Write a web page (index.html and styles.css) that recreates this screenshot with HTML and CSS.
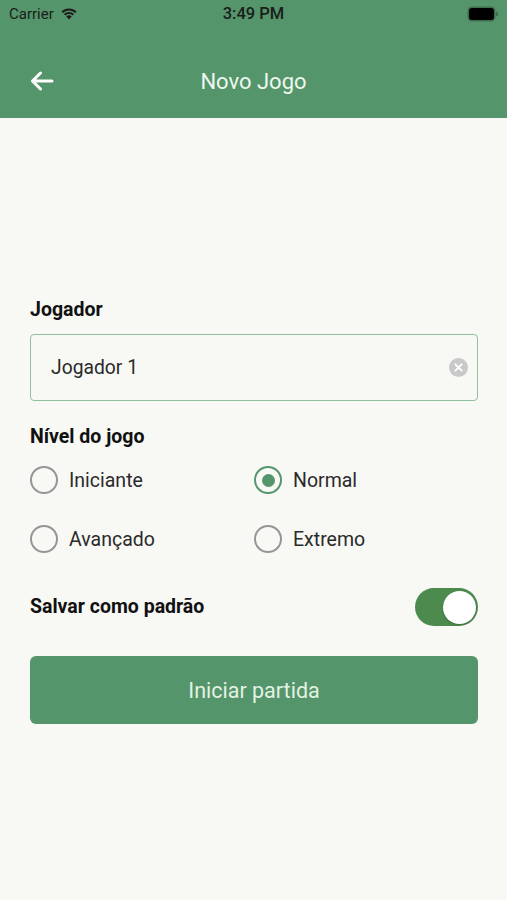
FILE: index.html
```html
<!DOCTYPE html>
<html lang="pt">
<head>
<meta charset="utf-8">
<title>Novo Jogo</title>
<link rel="stylesheet" href="styles.css">
</head>
<body>
<header class="header">
  <div class="status">
    <div class="status-left">
      <span class="carrier">Carrier</span>
      <svg class="wifi" width="18" height="14" viewBox="0 0 18 14">
        <path d="M9 13.5 L6.3 10.6 A3.8 3.8 0 0 1 11.7 10.6 Z" fill="#1c1c1c"/>
        <path d="M3.9 8.1 A7.2 7.2 0 0 1 14.1 8.1 L12.6 9.6 A5.1 5.1 0 0 0 5.4 9.6 Z" fill="#1c1c1c"/>
        <path d="M1.4 5.6 A10.7 10.7 0 0 1 16.6 5.6 L15.1 7.1 A8.6 8.6 0 0 0 2.9 7.1 Z" fill="#1c1c1c"/>
      </svg>
    </div>
    <span class="time">3:49 PM</span>
    <div class="battery"><span class="battery-fill"></span><span class="battery-tip"></span></div>
  </div>
  <div class="nav">
    <svg class="back" width="24" height="20" viewBox="0 0 24 20">
      <path d="M22 10 H3 M10.5 2 L2.5 10 L10.5 18" fill="none" stroke="#ffffff" stroke-width="3" stroke-linecap="round" stroke-linejoin="round"/>
    </svg>
    <h1 class="title">Novo Jogo</h1>
  </div>
</header>

<main class="content">
  <label class="section-label">Jogador</label>
  <div class="input">
    <span class="input-text">Jogador 1</span>
    <span class="clear">
      <svg width="19" height="19" viewBox="0 0 18 18">
        <circle cx="9" cy="9" r="9" fill="#c9c9c9"/>
        <path d="M6 6 L12 12 M12 6 L6 12" stroke="#ffffff" stroke-width="1.8" stroke-linecap="round"/>
      </svg>
    </span>
  </div>

  <label class="section-label level-label">Nível do jogo</label>
  <div class="radios">
    <div class="radio"><span class="circle"></span><span class="radio-text">Iniciante</span></div>
    <div class="radio"><span class="circle checked"></span><span class="radio-text">Normal</span></div>
    <div class="radio"><span class="circle"></span><span class="radio-text">Avançado</span></div>
    <div class="radio"><span class="circle"></span><span class="radio-text">Extremo</span></div>
  </div>

  <div class="switch-row">
    <span class="section-label">Salvar como padrão</span>
    <span class="toggle"><span class="thumb"></span></span>
  </div>

  <button class="start">Iniciar partida</button>
</main>
</body>
</html>
```

FILE: styles.css
```css
* { box-sizing: border-box; }
html, body {
  margin: 0;
  padding: 0;
  background: #f8f8f5;
  font-family: Roboto, "Liberation Sans", Arial, sans-serif;
}
.header {
  background: #54956b;
  height: 118px;
  display: flex;
  flex-direction: column;
}
.status {
  height: 27px;
  display: flex;
  align-items: center;
  justify-content: space-between;
  padding: 0 9px 0 9px;
  position: relative;
  font-size: 15px;
  color: #1c1c1c;
}
.status-left {
  display: flex;
  align-items: center;
  gap: 6px;
}
.carrier { font-weight: 400; }
.wifi { margin-top: -2px; }
.time {
  position: absolute;
  left: 0;
  right: 0;
  text-align: center;
  font-size: 16.5px;
  font-weight: 500;
  pointer-events: none;
}
.battery {
  display: flex;
  align-items: center;
}
.battery-fill {
  width: 25px;
  height: 12px;
  background: #000;
  border-radius: 3px;
  box-shadow: 0 0 0 1.5px #3f6e4f;
}
.battery-tip {
  width: 2px;
  height: 4px;
  background: #3f6e4f;
  margin-left: 2px;
  border-radius: 0 1px 1px 0;
}
.nav {
  flex: 1;
  display: flex;
  align-items: center;
  position: relative;
  padding-left: 30px;
  padding-top: 17px;
}
.back { display: block; }
.title {
  position: absolute;
  left: 0;
  right: 0;
  margin: 0;
  text-align: center;
  font-size: 22px;
  font-weight: 400;
  color: #eef7ee;
  pointer-events: none;
}
.content {
  padding: 182px 29px 0 30px;
  display: flex;
  flex-direction: column;
}
.section-label {
  display: block;
  font-size: 19.5px;
  line-height: 20px;
  font-weight: 700;
  color: #111;
}
.input {
  margin-top: 14px;
  height: 67px;
  border: 1.5px solid #8fbf9c;
  border-radius: 4px;
  display: flex;
  align-items: center;
  justify-content: space-between;
  padding: 0 9px 0 20px;
}
.input-text {
  font-size: 19.3px;
  color: #2a2a2a;
}
.clear svg { display: block; }
.level-label { margin-top: 26px; }
.radios {
  margin-top: 19px;
  display: grid;
  grid-template-columns: 224px 1fr;
  row-gap: 31px;
}
.radio {
  display: flex;
  align-items: center;
  gap: 11px;
  height: 28px;
}
.circle {
  flex: none;
  width: 28px;
  height: 28px;
  border-radius: 50%;
  border: 2px solid #959595;
  display: flex;
  align-items: center;
  justify-content: center;
}
.circle.checked { border-color: #54956b; }
.circle.checked::after {
  content: "";
  width: 13px;
  height: 13px;
  border-radius: 50%;
  background: #54956b;
}
.radio-text {
  font-size: 19.5px;
  color: #2a2a2a;
}
.switch-row {
  margin-top: 35px;
  height: 38px;
  display: flex;
  align-items: center;
  justify-content: space-between;
}
.toggle {
  width: 63px;
  height: 38px;
  border-radius: 19px;
  background: #4c8a4d;
  display: flex;
  align-items: center;
  justify-content: flex-end;
  padding: 0 2px;
}
.thumb {
  width: 33px;
  height: 33px;
  border-radius: 50%;
  background: #fff;
  box-shadow: 0 1px 2px rgba(0,0,0,0.2);
}
.start {
  margin-top: 30px;
  height: 68px;
  border: none;
  border-radius: 6px;
  background: #54956b;
  color: #e3f2e3;
  font-family: Roboto, "Liberation Sans", Arial, sans-serif;
  font-size: 21.5px;
  font-weight: 400;
}
```
